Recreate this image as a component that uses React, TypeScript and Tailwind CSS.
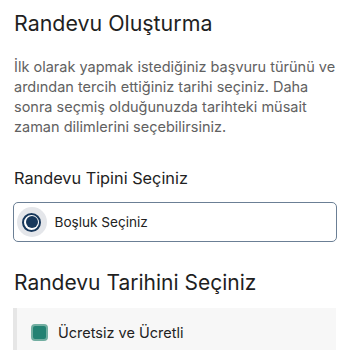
export default function App() {
  return (
    <div className="w-[350px] h-[350px] overflow-hidden bg-white px-[14px] pt-[9px] text-[#222]" style={{ fontFamily: 'Inter, "Noto Sans", sans-serif' }}>
      <h1 className="text-[21.4px] leading-[28px] text-[#1f1f1f]">Randevu Oluşturma</h1>
      <p className="mt-[20px] -mr-[2px] text-[14.5px] leading-[20px] text-[#616161]">
        İlk olarak yapmak istediğiniz başvuru türünü ve ardından tercih ettiğiniz tarihi seçiniz. Daha sonra seçmiş olduğunuzda tarihteki müsait zaman dilimlerini seçebilirsiniz.
      </p>

      <h2 className="mt-[30px] text-[16.3px] leading-[22px] text-[#222]">Randevu Tipini Seçiniz</h2>

      <div className="mt-[13px] h-[40px] w-[324px] -ml-[1.5px] flex items-center rounded-[5px] border border-[#6b7f95] bg-white">
        <div className="ml-[3px] w-[30px] h-[30px] rounded-full bg-[#e4e6ea] flex items-center justify-center">
          <div className="w-[19px] h-[19px] rounded-full border-2 border-[#17385c] flex items-center justify-center bg-white">
            <div className="w-[12px] h-[12px] rounded-full bg-[#17385c]" />
          </div>
        </div>
        <span className="ml-[8px] text-[13.6px] text-[#222]">Boşluk Seçiniz</span>
      </div>

      <h2 className="mt-[27px] text-[21px] leading-[28px] text-[#1f1f1f]">Randevu Tarihini Seçiniz</h2>

      <div className="mt-[11px] -ml-[1px] w-[323px] h-[60px] bg-[#f7f7f7] border-l-[4px] border-[#e6e6e6] flex items-start pt-[16px] pl-[14px]">
        <div className="w-[17px] h-[17px] rounded-[4px] border-2 border-[#72aea1] bg-[#248273] flex-shrink-0" />
        <span className="ml-[10px] text-[14.5px] leading-[18px] text-[#222]">Ücretsiz ve Ücretli</span>
      </div>
    </div>
  );
}
